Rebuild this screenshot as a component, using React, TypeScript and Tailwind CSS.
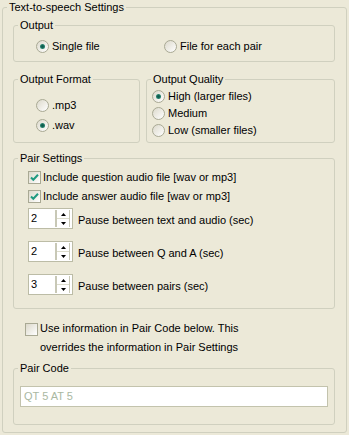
import React from 'react';

const Radio: React.FC<{ checked?: boolean }> = ({ checked }) => (
  <span className="flex items-center justify-center w-[13px] h-[13px] rounded-full border border-[#a9a994] bg-[linear-gradient(135deg,#dcd9cb,#ffffff)] shrink-0">
    {checked && (
      <span className="w-[5px] h-[5px] rounded-full bg-[radial-gradient(circle,#0d5a4c_20%,#3ea68c_100%)]" />
    )}
  </span>
);

const Check: React.FC<{ checked?: boolean }> = ({ checked }) => (
  <span className="flex items-center justify-center w-[13px] h-[13px] border border-[#a9a994] bg-[linear-gradient(135deg,#dcd9cb,#ffffff)] shrink-0">
    {checked && (
      <svg width="9" height="9" viewBox="0 0 9 9">
        <path d="M1 4.5 L3.3 6.8 L8 1.8" fill="none" stroke="#1f9a80" strokeWidth="2" />
      </svg>
    )}
  </span>
);

const Spinner: React.FC<{ value: string }> = ({ value }) => (
  <div className="flex w-[45px] h-[21px] border border-[#bcbca6] bg-white shrink-0">
    <span className="flex-1 pl-[2px] pt-[3px] text-[#000]">{value}</span>
    <div className="flex flex-col w-[15px] my-[1px] mr-[2px] border-l-2 border-r border-[#c8c8b6]">
      <div className="flex-1 flex items-center justify-center border-b border-[#dcdccc]">
        <svg width="5" height="3" viewBox="0 0 5 3">
          <path d="M0 3 L2.5 0 L5 3 Z" fill="#000" />
        </svg>
      </div>
      <div className="flex-1 flex items-center justify-center">
        <svg width="5" height="3" viewBox="0 0 5 3">
          <path d="M0 0 L2.5 3 L5 0 Z" fill="#000" />
        </svg>
      </div>
    </div>
  </div>
);

const group = 'border border-[#d0d0bf] rounded-[3px] pl-[4px]';

export default function App() {
  return (
    <div className="w-[349px] h-[435px] bg-[#ece9d8] pt-[1px] px-[2px] font-['Liberation_Sans',Arial,sans-serif] text-[11px] leading-[13px] text-black">
      <fieldset className="border border-[#d0d0bf] rounded-[3px] pl-[4px] pr-[11px] pb-[7px]">
        <legend className="px-[2px]">Text-to-speech Settings</legend>
        <div className="ml-[6px] flex flex-col">
          <fieldset className={`${group} pr-[4px] pt-[7px] pb-[8px] mt-[5px]`}>
            <legend className="px-[2px]">Output</legend>
            <div className="flex h-[14px] ml-[18px]">
              <label className="flex items-center gap-[3px] w-[128px]">
                <Radio checked />
                <span>Single file</span>
              </label>
              <label className="flex items-center gap-[3px]">
                <Radio />
                <span>File for each pair</span>
              </label>
            </div>
          </fieldset>

          <div className="flex gap-[6px] mt-[11px]">
            <fieldset className={`${group} w-[127px] pt-[12px] pb-[10px]`}>
              <legend className="px-[2px]">Output Format</legend>
              <div className="flex flex-col gap-[6px] ml-[18px]">
                <label className="flex items-center gap-[3px] h-[14px]">
                  <Radio />
                  <span>.mp3</span>
                </label>
                <label className="flex items-center gap-[3px] h-[14px]">
                  <Radio checked />
                  <span>.wav</span>
                </label>
              </div>
            </fieldset>
            <fieldset className={`${group} flex-1 pt-[2px]`}>
              <legend className="px-[2px]">Output Quality</legend>
              <div className="flex flex-col ml-[1px]">
                <label className="flex items-center gap-[3px] h-[17px]">
                  <Radio checked />
                  <span>High (larger files)</span>
                </label>
                <label className="flex items-center gap-[3px] h-[17px]">
                  <Radio />
                  <span>Medium</span>
                </label>
                <label className="flex items-center gap-[3px] h-[17px]">
                  <Radio />
                  <span>Low (smaller files)</span>
                </label>
              </div>
            </fieldset>
          </div>

          <fieldset className={`${group} pt-[3px] pb-[13px] mt-[9px]`}>
            <legend className="px-[2px]">Pair Settings</legend>
            <div className="flex flex-col ml-[10px]">
              <label className="flex items-center gap-[2px] h-[19px]">
                <Check checked />
                <span>Include question audio file [wav or mp3]</span>
              </label>
              <label className="flex items-center gap-[2px] h-[19px]">
                <Check checked />
                <span>Include answer audio file [wav or mp3]</span>
              </label>
              <div className="flex flex-col gap-[12px] mt-[2px]">
                <div className="flex items-center gap-[5px]">
                  <Spinner value="2" />
                  <span className="pt-[3px]">Pause between text and audio (sec)</span>
                </div>
                <div className="flex items-center gap-[5px]">
                  <Spinner value="2" />
                  <span className="pt-[3px]">Pause between Q and A (sec)</span>
                </div>
                <div className="flex items-center gap-[5px]">
                  <Spinner value="3" />
                  <span className="pt-[3px]">Pause between pairs (sec)</span>
                </div>
              </div>
            </div>
          </fieldset>

          <label className="flex items-start gap-[2px] ml-[12px] mt-[10px]">
            <span className="mt-[4px]">
              <Check />
            </span>
            <span className="leading-[19px]">
              Use information in Pair Code below. This
              <br />
              overrides the information in Pair Settings
            </span>
          </label>

          <fieldset className={`${group} pr-[4px] pt-[11px] pb-[17px] mt-[5px]`}>
            <legend className="px-[2px]">Pair Code</legend>
            <div className="mx-[2px] h-[21px] border border-[#c3c3ad] bg-white pl-[3px] flex items-center text-[#aab8a2]">
              QT 5 AT 5
            </div>
          </fieldset>
        </div>
      </fieldset>
    </div>
  );
}
